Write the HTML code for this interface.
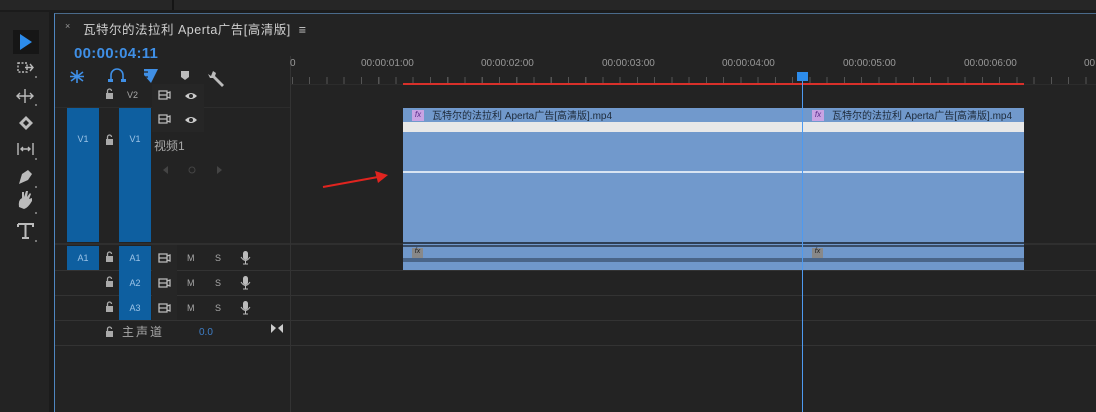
<!DOCTYPE html>
<html><head><meta charset="utf-8"><style>
*{margin:0;padding:0;box-sizing:border-box}
body{width:1096px;height:412px;overflow:hidden;background:#1b1b1b;font-family:"Liberation Sans","Noto Sans CJK SC",sans-serif;position:relative}
.a{position:absolute}
.t{color:#a8a8a8;font-size:10px;white-space:nowrap}
.blk{background:#0e5fa0}
.lbl{color:#9cc3e6;font-size:9px;text-align:center}
</style></head><body>
<div class="a" style="left:0;top:0;width:1096px;height:10px;background:#262626"></div>
<div class="a" style="left:172px;top:0;width:2px;height:10px;background:#151515"></div>
<div class="a" style="left:0;top:12px;width:49px;height:400px;background:#232323"></div>
<div class="a" style="left:54px;top:13px;width:1042px;height:399px;background:#232323;border-left:1px solid #4f86c0;border-top:1px solid #4a6a8a"></div>
<!-- toolbar -->
<div class="a" style="left:13px;top:30px;width:26px;height:24px;background:#161616"></div>
<svg class="a" style="left:0;top:0" width="50" height="250">
<path d="M20 34 L20 50 L32 42 Z" fill="#2d8ceb"/>
<g fill="none" stroke="#bbb" stroke-width="1.4">
<rect x="18" y="63" width="9" height="9" stroke-dasharray="2 1.5"/>
<path d="M25 67.5 H33 M30 64 L33 67.5 L30 71"/>
<path d="M17 96 H33 M20 93 L17 96 L20 99 M30 93 L33 96 L30 99 M25 89 V103"/>
<path d="M18 155 V143 M33 155 V143 M21 149 H30 M23 147 L21 149 L23 151 M28 147 L30 149 L28 151"/>
</g>
<path d="M19 123 L26 116 L33 123 L26 130 Z" fill="#bbb"/><path d="M23 123 L26 120 L29 123 L26 126Z" fill="#232323"/>
<path d="M19 184 L22 174 L28 170 L32 174 L28 180 Z" fill="#bbb"/>
<path d="M19 207 Q18 200 22 198 L22 192 L24 192 L24 197 L26 191 L28 191 L27 197 L30 193 L31 194 L29 199 L32 198 L32 201 Q28 208 24 209 Z" fill="#bbb"/>
<path d="M18 224 H33 V227 M18 224 V227 M25.5 224 V238 M22 238 H29" fill="none" stroke="#bbb" stroke-width="2"/>
<g fill="#777"><rect x="35" y="76" width="2" height="2"/><rect x="35" y="104" width="2" height="2"/><rect x="35" y="158" width="2" height="2"/><rect x="35" y="186" width="2" height="2"/><rect x="35" y="212" width="2" height="2"/><rect x="35" y="240" width="2" height="2"/></g>
</svg>
<!-- title -->
<div class="a t" style="left:65px;top:21px;font-size:9px;color:#999">×</div>
<div class="a" style="left:83px;top:19px;color:#cfcfcf;font-size:12.5px;letter-spacing:0.5px;white-space:nowrap">瓦特尔的法拉利 Aperta广告[高清版]&nbsp; ≡</div>
<div class="a" style="left:74px;top:45px;color:#3f8fe6;font-size:15px;font-weight:bold;letter-spacing:0.3px">00:00:04:11</div>
<svg class="a" style="left:60px;top:60px" width="240" height="30">
<g stroke="#3f8fe6" stroke-width="1.6" fill="none"><path d="M17 10 V23 M11 12 L23 21 M11 21 L23 12 M10 16.5 H24"/>
<path d="M51 21 V15 A6 6 0 0 1 63 15 V21"/></g>
<rect x="48" y="19" width="5" height="3" fill="#3f8fe6"/><rect x="61" y="19" width="5" height="3" fill="#3f8fe6"/>
<path d="M84 9 H98 L91 23 L84 15 Z" fill="#3f8fe6"/><path d="M84 12 H88 M84 17 H88" stroke="#232323" stroke-width="1.2"/>
<path d="M121 11 H129 V17 L125 20 L121 17 Z" fill="#bbb"/>
<path d="M153 11 L156 13 L155 16 L164 25 L162 27 L153 18 L150 18 L148 14 L151 16 Z" fill="#bbb"/>
</svg>
<!-- header rows -->
<div class="a" style="left:55px;top:107px;width:236px;height:1px;background:#2c2c2c"></div>
<div class="a" style="left:55px;top:243px;width:1041px;height:2px;background:#2f2f2f"></div>
<div class="a" style="left:55px;top:270px;width:1041px;height:1px;background:#333"></div>
<div class="a" style="left:55px;top:295px;width:1041px;height:1px;background:#333"></div>
<div class="a" style="left:55px;top:320px;width:1041px;height:1px;background:#333"></div>
<div class="a" style="left:55px;top:345px;width:1041px;height:1px;background:#333"></div>
<div class="a" style="left:291px;top:84px;width:805px;height:1px;background:#2c2c2c"></div>
<div class="a" style="left:290px;top:56px;width:1px;height:356px;background:#333"></div>
<div class="a" style="left:152px;top:84px;width:52px;height:24px;background:#262626"></div>
<div class="a" style="left:152px;top:108px;width:52px;height:24px;background:#262626"></div>
<div class="a" style="left:152px;top:245px;width:25px;height:75px;background:#262626"></div>
<div class="a blk" style="left:67px;top:108px;width:32px;height:134px"></div>
<div class="a blk" style="left:119px;top:108px;width:32px;height:134px"></div>
<div class="a blk" style="left:67px;top:246px;width:32px;height:24px"></div>
<div class="a blk" style="left:119px;top:246px;width:32px;height:74px"></div>
<div class="a lbl" style="left:67px;top:134px;width:32px">V1</div>
<div class="a lbl" style="left:119px;top:134px;width:32px">V1</div>
<div class="a t" style="left:127px;top:90px;font-size:9px">V2</div>
<div class="a lbl" style="left:67px;top:253px;width:32px">A1</div>
<div class="a lbl" style="left:119px;top:253px;width:32px">A1</div>
<div class="a lbl" style="left:119px;top:278px;width:32px">A2</div>
<div class="a lbl" style="left:119px;top:303px;width:32px">A3</div>
<div class="a t" style="left:154px;top:137px;font-size:12px">视频1</div>
<div class="a t" style="left:122px;top:323px;font-size:12px;letter-spacing:2px">主声道</div>
<div class="a" style="left:199px;top:327px;color:#3f7fc8;font-size:10px">0.0</div>
<svg class="a" style="left:0;top:0" width="290" height="345">
<defs><g id="lk"><rect x="0" y="4" width="7" height="6" fill="#aaa"/><path d="M1.5 4 V2 A2 2 0 0 1 5.5 2" stroke="#aaa" stroke-width="1.3" fill="none"/></g>
<g id="tg"><path d="M0 1 H8 V9 H0 Z M0 5 H8 M8 3 L11 2 V8 L8 7" stroke="#bbb" stroke-width="1.3" fill="none"/></g>
<g id="ey"><path d="M0 5 Q6 -1 12 5 Q6 11 0 5 Z" fill="#ccc"/><circle cx="6" cy="5" r="2" fill="#262626"/></g>
<g id="mic"><rect x="2" y="0" width="5" height="9" rx="2.5" fill="#bbb"/><path d="M0 6 Q4.5 13 9 6 M4.5 10 V13 M2 13 H7" stroke="#bbb" fill="none"/></g></defs>
<use href="#lk" x="106" y="89"/><use href="#lk" x="106" y="135"/><use href="#lk" x="106" y="252"/><use href="#lk" x="106" y="277"/><use href="#lk" x="106" y="302"/><use href="#lk" x="106" y="327"/>
<use href="#tg" x="159" y="90"/><use href="#tg" x="159" y="114"/><use href="#tg" x="159" y="253"/><use href="#tg" x="159" y="278"/><use href="#tg" x="159" y="303"/>
<use href="#ey" x="185" y="91"/><use href="#ey" x="185" y="115"/>
<use href="#mic" x="241" y="251"/><use href="#mic" x="241" y="276"/><use href="#mic" x="241" y="301"/>
<path d="M168 166 L163 170 L168 174Z M217 166 L222 170 L217 174Z" fill="#444"/><circle cx="192" cy="170" r="3" fill="none" stroke="#444"/>
<path d="M271 324 L276 328 L271 333 Z M283 324 L278 328 L283 333 Z" fill="#ccc"/>
</svg>
<div class="a t" style="left:187px;top:253px;font-size:9px">M</div><div class="a t" style="left:215px;top:253px;font-size:9px">S</div>
<div class="a t" style="left:187px;top:278px;font-size:9px">M</div><div class="a t" style="left:215px;top:278px;font-size:9px">S</div>
<div class="a t" style="left:187px;top:303px;font-size:9px">M</div><div class="a t" style="left:215px;top:303px;font-size:9px">S</div>
<!-- ruler -->
<div class="a t" style="left:290px;top:58px;font-size:10px;color:#999">0</div>
<div class="a t" style="left:361px;top:58px;font-size:10px;color:#999">00:00:01:00</div>
<div class="a t" style="left:481px;top:58px;font-size:10px;color:#999">00:00:02:00</div>
<div class="a t" style="left:602px;top:58px;font-size:10px;color:#999">00:00:03:00</div>
<div class="a t" style="left:722px;top:58px;font-size:10px;color:#999">00:00:04:00</div>
<div class="a t" style="left:843px;top:58px;font-size:10px;color:#999">00:00:05:00</div>
<div class="a t" style="left:964px;top:58px;font-size:10px;color:#999">00:00:06:00</div>
<div class="a t" style="left:1084px;top:58px;font-size:10px;color:#999">00</div>
<div class="a" style="left:292px;top:77px;width:804px;height:7px;background:repeating-linear-gradient(90deg,#555 0 1px,transparent 1px 17.25px)"></div>
<div class="a" style="left:403px;top:83px;width:621px;height:2px;background:#d8302a"></div>
<!-- video clip -->
<div class="a" style="left:403px;top:108px;width:621px;height:134px;background:#7199cc"></div>
<div class="a" style="left:403px;top:122px;width:621px;height:10px;background:#e8e8e8"></div>
<div class="a" style="left:403px;top:171px;width:621px;height:2px;background:#d8e4f2"></div>
<div class="a" style="left:412px;top:110px;width:12px;height:11px;background:#c9a3e3;color:#5a2b8a;font-size:8px;font-style:italic;text-align:center">fx</div>
<div class="a" style="left:812px;top:110px;width:12px;height:11px;background:#c9a3e3;color:#5a2b8a;font-size:8px;font-style:italic;text-align:center">fx</div>
<div class="a" style="left:432px;top:107px;font-size:10px;color:#1d2a3a;white-space:nowrap">瓦特尔的法拉利 Aperta广告[高清版].mp4</div>
<div class="a" style="left:832px;top:107px;font-size:10px;color:#1d2a3a;white-space:nowrap;width:192px;overflow:hidden">瓦特尔的法拉利 Aperta广告[高清版].mp4</div>
<!-- audio clip -->
<div class="a" style="left:403px;top:242px;width:621px;height:28px;background:#7098cb"></div>
<div class="a" style="left:403px;top:242px;width:621px;height:2px;background:#2e3f55"></div>
<div class="a" style="left:403px;top:245px;width:621px;height:2px;background:#3a4d66"></div>
<div class="a" style="left:403px;top:258px;width:621px;height:4px;background:#4a6588"></div>
<div class="a" style="left:412px;top:248px;width:11px;height:10px;background:#888;color:#222;font-size:7px;font-style:italic;text-align:center">fx</div>
<div class="a" style="left:812px;top:248px;width:11px;height:10px;background:#888;color:#222;font-size:7px;font-style:italic;text-align:center">fx</div>
<!-- playhead -->
<div class="a" style="left:802px;top:72px;width:1px;height:340px;background:#4e9af0"></div>
<div class="a" style="left:797px;top:72px;width:11px;height:9px;background:#2d8ceb"></div>
<!-- arrow -->
<svg class="a" style="left:320px;top:168px" width="75" height="25"><path d="M3 19 L58 9" stroke="#e0241f" stroke-width="2"/><path d="M68 7 L55 3 L58 15 Z" fill="#e0241f"/></svg>
</body></html>
